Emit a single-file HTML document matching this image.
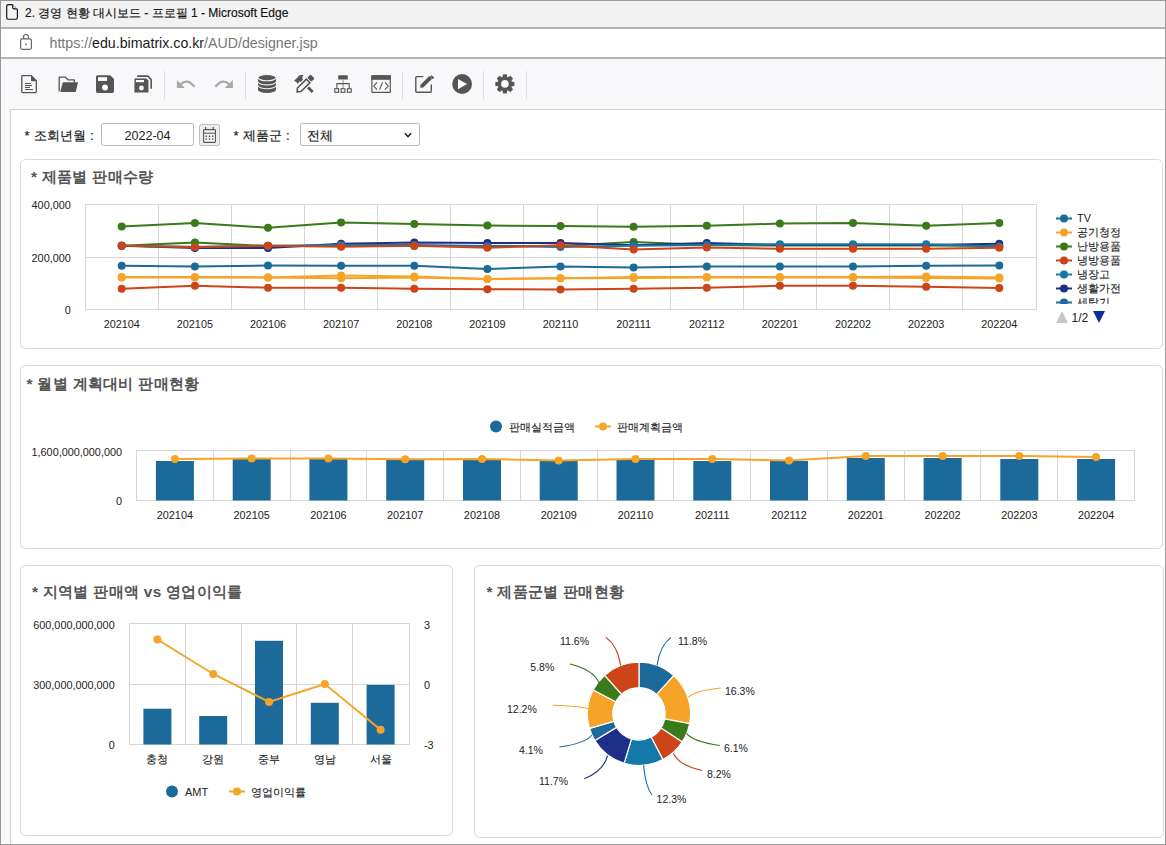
<!DOCTYPE html>
<html><head><meta charset="utf-8"><style>
html,body{margin:0;padding:0;width:1166px;height:845px;overflow:hidden;background:#fff;font-family:"Liberation Sans", sans-serif;}
.abs{position:absolute;}
svg text{font-family:"Liberation Sans", sans-serif;}
</style></head><body>
<div class="abs" style="left:0;top:0;width:1166px;height:27px;background:#f2f2f2;"></div>
<div class="abs" style="left:0;top:27px;width:1166px;height:2px;background:#b2b2b2;"></div>
<div class="abs" style="left:0;top:29px;width:1166px;height:28px;background:#fff;"></div>
<div class="abs" style="left:0;top:57px;width:1166px;height:2px;background:#b4b4b4;"></div>
<div class="abs" style="left:0;top:59px;width:1166px;height:786px;background:#f8f8fa;"></div>
<div class="abs" style="left:10px;top:109px;width:1156px;height:736px;background:#fff;border-left:1px solid #cfcfcf;border-top:1px solid #cfcfcf;"></div>
<svg class="abs" style="left:0;top:0" width="1166" height="845" viewBox="0 0 1166 845">
<g id="topbar">
<path d="M12.7,4.6 H8.3 a1.6,1.6 0 0 0 -1.6,1.6 V17.6 a1.6,1.6 0 0 0 1.6,1.6 H15.8 a1.6,1.6 0 0 0 1.6,-1.6 V9.1 M12.7,4.6 V7.6 a1.3,1.3 0 0 0 1.3,1.3 H17.4" fill="none" stroke="#111" stroke-width="1.15"/>
<path d="M12.7,4.6 L17.4,9.2" stroke="#777" stroke-width="0.8"/>
<text x="25" y="17" font-size="12" fill="#111" stroke="#111" stroke-width="0.15">2. 경영 현황 대시보드 - 프로필 1 - Microsoft Edge</text>
<path d="M23.5,38.5 v-1.5 a2.5,2.5 0 0 1 5,0 v1.5" fill="none" stroke="#666" stroke-width="1.2"/>
<rect x="20.6" y="38.9" width="10.8" height="10.4" rx="1.5" fill="none" stroke="#666" stroke-width="1.2"/>
<circle cx="26" cy="44.3" r="0.9" fill="#666"/>
<text x="49.5" y="48" font-size="14.2" fill="#767676">https://<tspan fill="#1a1a1a">edu.bimatrix.co.kr</tspan>/AUD/designer.jsp</text>
</g>

<g fill="#555" stroke="none">
<!-- doc -->
<path d="M21.8,76.5 a0.8,0.8 0 0 1 0.8,-0.8 h8.6 l5.1,5.1 v11 a0.8,0.8 0 0 1 -0.8,0.8 h-12.9 a0.8,0.8 0 0 1 -0.8,-0.8 z" fill="none" stroke="#555" stroke-width="1.3"/>
<path d="M31,75.5 L37,81.3 L31,81.3 Z"/>
<rect x="25" y="83" width="6" height="1"/><rect x="25" y="85" width="7" height="1"/><rect x="25" y="87" width="5" height="1"/><rect x="25" y="89" width="8" height="1"/>
<!-- folder -->
<path d="M59.2,91.3 V77.2 h6.2 l2.6,2.6 h6.3 v2.5" fill="none" stroke="#555" stroke-width="1.3" stroke-linejoin="round"/>
<path d="M62.8,82.2 H78 L75.8,91.9 H60.3 Z"/>
<!-- save -->
<path d="M96,76.8 a1.6,1.6 0 0 1 1.6,-1.6 h12.6 l3.8,3.8 v12.3 a1.6,1.6 0 0 1 -1.6,1.6 h-14.8 a1.6,1.6 0 0 1 -1.6,-1.6 z"/>
<rect x="98" y="77.2" width="9.1" height="3.7" fill="#fff"/>
<circle cx="105" cy="87.5" r="2.9" fill="#fff"/>
<!-- save all -->
<path d="M137.2,76.1 h10.6 l3.4,3.4 v9.2" fill="none" stroke="#555" stroke-width="1.6"/>
<path d="M134,79 a1,1 0 0 1 1,-1 h11.3 l2.6,2.6 v11.3 a1,1 0 0 1 -1,1 h-12.9 a1,1 0 0 1 -1,-1 z" stroke="#f8f8fa" stroke-width="0.8"/>
<rect x="135.9" y="80" width="8.1" height="2.2" fill="#fff"/>
<circle cx="141.4" cy="88" r="2.4" fill="#fff"/>
</g>
<g stroke="#dcdce0" stroke-width="1">
<line x1="164.5" y1="71" x2="164.5" y2="99"/><line x1="245.5" y1="71" x2="245.5" y2="99"/><line x1="402.5" y1="71" x2="402.5" y2="99"/><line x1="483.5" y1="71" x2="483.5" y2="99"/><line x1="526.5" y1="71" x2="526.5" y2="99"/>
</g>
<g fill="#a8a8a8" stroke="none">
<path d="M176.9,80 V88 H184.9 Z"/>
<path d="M180.5,84.5 Q187,77.5 194.5,86.8" fill="none" stroke="#a8a8a8" stroke-width="2.2"/>
<path d="M232.9,80 V88 H224.9 Z"/>
<path d="M229.3,84.5 Q222.8,77.5 215.3,86.8" fill="none" stroke="#a8a8a8" stroke-width="2.2"/>
</g>
<g fill="#555" stroke="none">
<!-- database -->
<path d="M258,78.2 A9,3.2 0 0 1 276,78.2 V89.7 A9,3.2 0 0 1 258,89.7 Z"/>
<path d="M258,77.6 A9,3.2 0 0 0 276,77.6 M258,81.7 A9,3.2 0 0 0 276,81.7 M258,85.5 A9,3.2 0 0 0 276,85.5" fill="none" stroke="#f8f8fa" stroke-width="1.1"/>
<!-- tools: hammer + pencil -->
<path d="M302.2,79.6 L313.6,91 L311.6,93 L300.2,81.6 Z"/>
<path d="M294,80.8 L296.5,78.5 L298.5,76.3 L300.2,75 L303.3,75 L302.6,76.6 L302.1,78 L303.6,80.2 L301.4,82.6 L299.4,81.5 L297.8,84 L296.6,82.2 Z"/>
<g transform="translate(296.4,92.6) rotate(-45)">
<path d="M0.6,0 L4,-2.8 H17 V2.8 H4 Z" fill="#f8f8fa" stroke="#f8f8fa" stroke-width="3.4" stroke-linejoin="round"/>
<path d="M0.9,0 L4,-2.5 H16.6 V2.5 H4 Z" fill="#f8f8fa" stroke="#555" stroke-width="1.6" stroke-linejoin="miter"/>
<rect x="18.2" y="-2.9" width="4.6" height="5.8" rx="1"/>
</g>
<!-- hierarchy -->
<rect x="338.2" y="75.3" width="9.6" height="4.2" rx="0.6"/>
<rect x="342.5" y="79.4" width="1.1" height="9" fill="#999"/>
<path d="M336.9,88.4 V83.6 H349.2 V88.4" fill="none" stroke="#555" stroke-width="1.1"/>
<rect x="334.8" y="88.7" width="3.8" height="3.6" fill="none" stroke="#555" stroke-width="1.1"/>
<rect x="341.1" y="88.7" width="3.8" height="3.6" fill="none" stroke="#555" stroke-width="1.1"/>
<rect x="347.4" y="88.7" width="3.8" height="3.6" fill="none" stroke="#555" stroke-width="1.1"/>
<!-- code window -->
<rect x="371.9" y="75.9" width="18.4" height="16.4" rx="0.6" fill="none" stroke="#555" stroke-width="1.2"/>
<rect x="371.3" y="75.3" width="19.6" height="4.5"/>
<path d="M377,82.4 L373.8,86 L377,89.6 M379.6,89.6 L382.6,82.4 M385,82.4 L388.2,86 L385,89.6" fill="none" stroke="#555" stroke-width="1.1"/>
<!-- edit -->
<path d="M423.2,76.6 H416.8 a1,1 0 0 0 -1,1 V91.3 a1,1 0 0 0 1,1 H430.3 a1,1 0 0 0 1,-1 V84.6" fill="none" stroke="#555" stroke-width="1.4"/>
<path d="M420.2,87.8 L420.5,84.8 L429.3,76 L432.1,78.8 L423.3,87.6 Z"/>
<path d="M430.4,74.9 L432,73.7 L434.4,76.1 L433.2,77.7 Z" transform="translate(-0.3,1.5)"/>
<!-- play -->
<circle cx="462.1" cy="84" r="9.9"/>
<path d="M458,79 V89.2 L467.1,84 Z" fill="#fff"/>
<!-- gear -->
<g transform="translate(504.9,83.9)">
<path d="M-1.93,-6.31 L-1.42,-8.99 L1.42,-8.99 L1.93,-6.31 L3.10,-5.83 L5.35,-7.36 L7.36,-5.35 L5.83,-3.10 L6.31,-1.93 L8.99,-1.42 L8.99,1.42 L6.31,1.93 L5.83,3.10 L7.36,5.35 L5.35,7.36 L3.10,5.83 L1.93,6.31 L1.42,8.99 L-1.42,8.99 L-1.93,6.31 L-3.10,5.83 L-5.35,7.36 L-7.36,5.35 L-5.83,3.10 L-6.31,1.93 L-8.99,1.42 L-8.99,-1.42 L-6.31,-1.93 L-5.83,-3.10 L-7.36,-5.35 L-5.35,-7.36 L-3.10,-5.83 Z" stroke="#555" stroke-width="1.2" stroke-linejoin="round"/>
<circle r="3.8" fill="#f8f8fa"/>
</g>
</g>

<text x="24.5" y="140" font-size="13" fill="#222" stroke="#222" stroke-width="0.2">*<tspan dx="1.3"> 조회년월 :</tspan></text>
<rect x="101.5" y="123.5" width="92" height="22" rx="2" fill="#fff" stroke="#b8b8b8"/>
<text x="147.5" y="140" font-size="12.6" fill="#222" text-anchor="middle">2022-04</text>
<rect x="199.5" y="124.5" width="20" height="21" rx="2" fill="#ededf0" stroke="#bdbdbd"/>
<g fill="none" stroke="#555" stroke-width="1.1">
<rect x="203.6" y="129.6" width="11.8" height="12.8" rx="0.6" fill="#fafafa"/>
<line x1="203.6" y1="133.2" x2="215.4" y2="133.2"/>
<line x1="205.6" y1="127" x2="205.6" y2="130"/><line x1="213.3" y1="127" x2="213.3" y2="130"/>
</g>
<g fill="#555"><circle cx="206.2" cy="136.2" r="0.85"/><circle cx="209.5" cy="136.2" r="0.85"/><circle cx="212.7" cy="136.2" r="0.85"/><circle cx="206.2" cy="139.1" r="0.85"/><circle cx="209.5" cy="139.1" r="0.85"/><circle cx="212.7" cy="139.1" r="0.85"/></g>
<text x="233.5" y="140" font-size="13" fill="#222" stroke="#222" stroke-width="0.2">*<tspan dx="1.3"> 제품군 :</tspan></text>
<rect x="300.5" y="123.5" width="119" height="22" rx="2" fill="#fff" stroke="#b8b8b8"/>
<text x="307" y="140" font-size="13" fill="#222" stroke="#222" stroke-width="0.2">전체</text>
<path d="M404.8,133.2 L408,136.6 L411.2,133.2" fill="none" stroke="#222" stroke-width="1.5"/>
<rect x="20.5" y="159.5" width="1142" height="189" rx="5" fill="#fff" stroke="#d9d9d9"/>
<rect x="20.5" y="365.5" width="1142" height="183" rx="5" fill="#fff" stroke="#d9d9d9"/>
<rect x="20.5" y="565.5" width="432" height="270" rx="5" fill="#fff" stroke="#d9d9d9"/>
<rect x="474.5" y="565.5" width="689" height="272" rx="5" fill="#fff" stroke="#d9d9d9"/>
<rect x="85.5" y="204.5" width="951.0" height="105.0" fill="none" stroke="#d6d6d6"/>
<line x1="85.5" y1="257.5" x2="1036.5" y2="257.5" stroke="#d6d6d6"/>
<line x1="158.5" y1="204.5" x2="158.5" y2="309.5" stroke="#d6d6d6"/>
<line x1="231.5" y1="204.5" x2="231.5" y2="309.5" stroke="#d6d6d6"/>
<line x1="304.5" y1="204.5" x2="304.5" y2="309.5" stroke="#d6d6d6"/>
<line x1="377.5" y1="204.5" x2="377.5" y2="309.5" stroke="#d6d6d6"/>
<line x1="450.5" y1="204.5" x2="450.5" y2="309.5" stroke="#d6d6d6"/>
<line x1="523.5" y1="204.5" x2="523.5" y2="309.5" stroke="#d6d6d6"/>
<line x1="597.5" y1="204.5" x2="597.5" y2="309.5" stroke="#d6d6d6"/>
<line x1="670.5" y1="204.5" x2="670.5" y2="309.5" stroke="#d6d6d6"/>
<line x1="743.5" y1="204.5" x2="743.5" y2="309.5" stroke="#d6d6d6"/>
<line x1="816.5" y1="204.5" x2="816.5" y2="309.5" stroke="#d6d6d6"/>
<line x1="889.5" y1="204.5" x2="889.5" y2="309.5" stroke="#d6d6d6"/>
<line x1="962.5" y1="204.5" x2="962.5" y2="309.5" stroke="#d6d6d6"/>
<text x="70.8" y="209" font-size="10.85" fill="#222" text-anchor="end" font-weight="normal">400,000</text>
<text x="70.8" y="261.5" font-size="10.85" fill="#222" text-anchor="end" font-weight="normal">200,000</text>
<text x="70.8" y="313.5" font-size="10.85" fill="#222" text-anchor="end" font-weight="normal">0</text>
<text x="121.735" y="328" font-size="10.85" fill="#222" text-anchor="middle" font-weight="normal">202104</text>
<text x="194.865" y="328" font-size="10.85" fill="#222" text-anchor="middle" font-weight="normal">202105</text>
<text x="267.995" y="328" font-size="10.85" fill="#222" text-anchor="middle" font-weight="normal">202106</text>
<text x="341.125" y="328" font-size="10.85" fill="#222" text-anchor="middle" font-weight="normal">202107</text>
<text x="414.255" y="328" font-size="10.85" fill="#222" text-anchor="middle" font-weight="normal">202108</text>
<text x="487.385" y="328" font-size="10.85" fill="#222" text-anchor="middle" font-weight="normal">202109</text>
<text x="560.515" y="328" font-size="10.85" fill="#222" text-anchor="middle" font-weight="normal">202110</text>
<text x="633.6449999999999" y="328" font-size="10.85" fill="#222" text-anchor="middle" font-weight="normal">202111</text>
<text x="706.775" y="328" font-size="10.85" fill="#222" text-anchor="middle" font-weight="normal">202112</text>
<text x="779.9049999999999" y="328" font-size="10.85" fill="#222" text-anchor="middle" font-weight="normal">202201</text>
<text x="853.035" y="328" font-size="10.85" fill="#222" text-anchor="middle" font-weight="normal">202202</text>
<text x="926.1649999999998" y="328" font-size="10.85" fill="#222" text-anchor="middle" font-weight="normal">202203</text>
<text x="999.295" y="328" font-size="10.85" fill="#222" text-anchor="middle" font-weight="normal">202204</text>
<polyline points="121.7,245.8 194.9,242.5 268.0,246 341.1,246 414.3,246 487.4,246 560.5,246 633.6,241.9 706.8,245 779.9,245.5 853.0,245.5 926.2,245.5 999.3,246" fill="none" stroke="#3a7a1a" stroke-width="2"/>
<circle cx="121.7" cy="245.8" r="4" fill="#3a7a1a"/>
<circle cx="194.9" cy="242.5" r="4" fill="#3a7a1a"/>
<circle cx="268.0" cy="246" r="4" fill="#3a7a1a"/>
<circle cx="341.1" cy="246" r="4" fill="#3a7a1a"/>
<circle cx="414.3" cy="246" r="4" fill="#3a7a1a"/>
<circle cx="487.4" cy="246" r="4" fill="#3a7a1a"/>
<circle cx="560.5" cy="246" r="4" fill="#3a7a1a"/>
<circle cx="633.6" cy="241.9" r="4" fill="#3a7a1a"/>
<circle cx="706.8" cy="245" r="4" fill="#3a7a1a"/>
<circle cx="779.9" cy="245.5" r="4" fill="#3a7a1a"/>
<circle cx="853.0" cy="245.5" r="4" fill="#3a7a1a"/>
<circle cx="926.2" cy="245.5" r="4" fill="#3a7a1a"/>
<circle cx="999.3" cy="246" r="4" fill="#3a7a1a"/>
<polyline points="121.7,265.7 194.9,266.6 268.0,265.5 341.1,265.7 414.3,265.7 487.4,268.9 560.5,266.6 633.6,267.5 706.8,266.6 779.9,266.6 853.0,266.6 926.2,265.7 999.3,265.6" fill="none" stroke="#1b6a9a" stroke-width="2"/>
<circle cx="121.7" cy="265.7" r="4" fill="#1b6a9a"/>
<circle cx="194.9" cy="266.6" r="4" fill="#1b6a9a"/>
<circle cx="268.0" cy="265.5" r="4" fill="#1b6a9a"/>
<circle cx="341.1" cy="265.7" r="4" fill="#1b6a9a"/>
<circle cx="414.3" cy="265.7" r="4" fill="#1b6a9a"/>
<circle cx="487.4" cy="268.9" r="4" fill="#1b6a9a"/>
<circle cx="560.5" cy="266.6" r="4" fill="#1b6a9a"/>
<circle cx="633.6" cy="267.5" r="4" fill="#1b6a9a"/>
<circle cx="706.8" cy="266.6" r="4" fill="#1b6a9a"/>
<circle cx="779.9" cy="266.6" r="4" fill="#1b6a9a"/>
<circle cx="853.0" cy="266.6" r="4" fill="#1b6a9a"/>
<circle cx="926.2" cy="265.7" r="4" fill="#1b6a9a"/>
<circle cx="999.3" cy="265.6" r="4" fill="#1b6a9a"/>
<polyline points="121.7,277 194.9,277 268.0,277.4 341.1,275.5 414.3,276.4 487.4,278.9 560.5,278.3 633.6,277 706.8,277 779.9,277 853.0,277 926.2,276.4 999.3,277.6" fill="none" stroke="#f6a428" stroke-width="2"/>
<circle cx="121.7" cy="277" r="4" fill="#f6a428"/>
<circle cx="194.9" cy="277" r="4" fill="#f6a428"/>
<circle cx="268.0" cy="277.4" r="4" fill="#f6a428"/>
<circle cx="341.1" cy="275.5" r="4" fill="#f6a428"/>
<circle cx="414.3" cy="276.4" r="4" fill="#f6a428"/>
<circle cx="487.4" cy="278.9" r="4" fill="#f6a428"/>
<circle cx="560.5" cy="278.3" r="4" fill="#f6a428"/>
<circle cx="633.6" cy="277" r="4" fill="#f6a428"/>
<circle cx="706.8" cy="277" r="4" fill="#f6a428"/>
<circle cx="779.9" cy="277" r="4" fill="#f6a428"/>
<circle cx="853.0" cy="277" r="4" fill="#f6a428"/>
<circle cx="926.2" cy="276.4" r="4" fill="#f6a428"/>
<circle cx="999.3" cy="277.6" r="4" fill="#f6a428"/>
<polyline points="121.7,277.5 194.9,277.5 268.0,277.5 341.1,278.3 414.3,277.5 487.4,279 560.5,278.3 633.6,278 706.8,277.5 779.9,277.5 853.0,277.5 926.2,278 999.3,278.5" fill="none" stroke="#f6a428" stroke-width="2"/>
<circle cx="121.7" cy="277.5" r="4" fill="#f6a428"/>
<circle cx="194.9" cy="277.5" r="4" fill="#f6a428"/>
<circle cx="268.0" cy="277.5" r="4" fill="#f6a428"/>
<circle cx="341.1" cy="278.3" r="4" fill="#f6a428"/>
<circle cx="414.3" cy="277.5" r="4" fill="#f6a428"/>
<circle cx="487.4" cy="279" r="4" fill="#f6a428"/>
<circle cx="560.5" cy="278.3" r="4" fill="#f6a428"/>
<circle cx="633.6" cy="278" r="4" fill="#f6a428"/>
<circle cx="706.8" cy="277.5" r="4" fill="#f6a428"/>
<circle cx="779.9" cy="277.5" r="4" fill="#f6a428"/>
<circle cx="853.0" cy="277.5" r="4" fill="#f6a428"/>
<circle cx="926.2" cy="278" r="4" fill="#f6a428"/>
<circle cx="999.3" cy="278.5" r="4" fill="#f6a428"/>
<polyline points="121.7,288.7 194.9,285.8 268.0,287.7 341.1,287.7 414.3,288.7 487.4,289.2 560.5,289.6 633.6,288.7 706.8,287.7 779.9,285.8 853.0,285.8 926.2,286.8 999.3,287.9" fill="none" stroke="#cc4418" stroke-width="2"/>
<circle cx="121.7" cy="288.7" r="4" fill="#cc4418"/>
<circle cx="194.9" cy="285.8" r="4" fill="#cc4418"/>
<circle cx="268.0" cy="287.7" r="4" fill="#cc4418"/>
<circle cx="341.1" cy="287.7" r="4" fill="#cc4418"/>
<circle cx="414.3" cy="288.7" r="4" fill="#cc4418"/>
<circle cx="487.4" cy="289.2" r="4" fill="#cc4418"/>
<circle cx="560.5" cy="289.6" r="4" fill="#cc4418"/>
<circle cx="633.6" cy="288.7" r="4" fill="#cc4418"/>
<circle cx="706.8" cy="287.7" r="4" fill="#cc4418"/>
<circle cx="779.9" cy="285.8" r="4" fill="#cc4418"/>
<circle cx="853.0" cy="285.8" r="4" fill="#cc4418"/>
<circle cx="926.2" cy="286.8" r="4" fill="#cc4418"/>
<circle cx="999.3" cy="287.9" r="4" fill="#cc4418"/>
<polyline points="121.7,226.4 194.9,223 268.0,227.7 341.1,222.6 414.3,224 487.4,225.5 560.5,226 633.6,226.8 706.8,225.8 779.9,223.6 853.0,223 926.2,225.8 999.3,223" fill="none" stroke="#3a7a1a" stroke-width="2"/>
<circle cx="121.7" cy="226.4" r="4" fill="#3a7a1a"/>
<circle cx="194.9" cy="223" r="4" fill="#3a7a1a"/>
<circle cx="268.0" cy="227.7" r="4" fill="#3a7a1a"/>
<circle cx="341.1" cy="222.6" r="4" fill="#3a7a1a"/>
<circle cx="414.3" cy="224" r="4" fill="#3a7a1a"/>
<circle cx="487.4" cy="225.5" r="4" fill="#3a7a1a"/>
<circle cx="560.5" cy="226" r="4" fill="#3a7a1a"/>
<circle cx="633.6" cy="226.8" r="4" fill="#3a7a1a"/>
<circle cx="706.8" cy="225.8" r="4" fill="#3a7a1a"/>
<circle cx="779.9" cy="223.6" r="4" fill="#3a7a1a"/>
<circle cx="853.0" cy="223" r="4" fill="#3a7a1a"/>
<circle cx="926.2" cy="225.8" r="4" fill="#3a7a1a"/>
<circle cx="999.3" cy="223" r="4" fill="#3a7a1a"/>
<polyline points="121.7,245.8 194.9,248 268.0,248 341.1,243.8 414.3,242.5 487.4,243 560.5,243 633.6,245.3 706.8,243 779.9,245 853.0,245 926.2,245 999.3,243.8" fill="none" stroke="#1f2f87" stroke-width="2"/>
<circle cx="121.7" cy="245.8" r="4" fill="#1f2f87"/>
<circle cx="194.9" cy="248" r="4" fill="#1f2f87"/>
<circle cx="268.0" cy="248" r="4" fill="#1f2f87"/>
<circle cx="341.1" cy="243.8" r="4" fill="#1f2f87"/>
<circle cx="414.3" cy="242.5" r="4" fill="#1f2f87"/>
<circle cx="487.4" cy="243" r="4" fill="#1f2f87"/>
<circle cx="560.5" cy="243" r="4" fill="#1f2f87"/>
<circle cx="633.6" cy="245.3" r="4" fill="#1f2f87"/>
<circle cx="706.8" cy="243" r="4" fill="#1f2f87"/>
<circle cx="779.9" cy="245" r="4" fill="#1f2f87"/>
<circle cx="853.0" cy="245" r="4" fill="#1f2f87"/>
<circle cx="926.2" cy="245" r="4" fill="#1f2f87"/>
<circle cx="999.3" cy="243.8" r="4" fill="#1f2f87"/>
<polyline points="121.7,245.8 194.9,247 268.0,245.8 341.1,245 414.3,245 487.4,246 560.5,247 633.6,245.8 706.8,245 779.9,244.3 853.0,244.3 926.2,244.3 999.3,246.5" fill="none" stroke="#1478a8" stroke-width="2"/>
<circle cx="121.7" cy="245.8" r="4" fill="#1478a8"/>
<circle cx="194.9" cy="247" r="4" fill="#1478a8"/>
<circle cx="268.0" cy="245.8" r="4" fill="#1478a8"/>
<circle cx="341.1" cy="245" r="4" fill="#1478a8"/>
<circle cx="414.3" cy="245" r="4" fill="#1478a8"/>
<circle cx="487.4" cy="246" r="4" fill="#1478a8"/>
<circle cx="560.5" cy="247" r="4" fill="#1478a8"/>
<circle cx="633.6" cy="245.8" r="4" fill="#1478a8"/>
<circle cx="706.8" cy="245" r="4" fill="#1478a8"/>
<circle cx="779.9" cy="244.3" r="4" fill="#1478a8"/>
<circle cx="853.0" cy="244.3" r="4" fill="#1478a8"/>
<circle cx="926.2" cy="244.3" r="4" fill="#1478a8"/>
<circle cx="999.3" cy="246.5" r="4" fill="#1478a8"/>
<polyline points="121.7,245.8 194.9,247 268.0,245.8 341.1,246.8 414.3,245.7 487.4,247.7 560.5,245.3 633.6,249.4 706.8,247.5 779.9,248.7 853.0,248.7 926.2,248.7 999.3,247.8" fill="none" stroke="#cc4418" stroke-width="2"/>
<circle cx="121.7" cy="245.8" r="4" fill="#cc4418"/>
<circle cx="194.9" cy="247" r="4" fill="#cc4418"/>
<circle cx="268.0" cy="245.8" r="4" fill="#cc4418"/>
<circle cx="341.1" cy="246.8" r="4" fill="#cc4418"/>
<circle cx="414.3" cy="245.7" r="4" fill="#cc4418"/>
<circle cx="487.4" cy="247.7" r="4" fill="#cc4418"/>
<circle cx="560.5" cy="245.3" r="4" fill="#cc4418"/>
<circle cx="633.6" cy="249.4" r="4" fill="#cc4418"/>
<circle cx="706.8" cy="247.5" r="4" fill="#cc4418"/>
<circle cx="779.9" cy="248.7" r="4" fill="#cc4418"/>
<circle cx="853.0" cy="248.7" r="4" fill="#cc4418"/>
<circle cx="926.2" cy="248.7" r="4" fill="#cc4418"/>
<circle cx="999.3" cy="247.8" r="4" fill="#cc4418"/>
<clipPath id="lc"><rect x="1050" y="205" width="100" height="99"/></clipPath><g clip-path="url(#lc)">
<line x1="1056" y1="218.5" x2="1072" y2="218.5" stroke="#1b6a9a" stroke-width="2"/><circle cx="1064" cy="218.5" r="4" fill="#1b6a9a"/>
<text x="1077" y="221.7" font-size="11" fill="#222" text-anchor="start" font-weight="normal">TV</text>
<line x1="1056" y1="232.5" x2="1072" y2="232.5" stroke="#f6a428" stroke-width="2"/><circle cx="1064" cy="232.5" r="4" fill="#f6a428"/>
<text x="1077" y="235.7" font-size="11" fill="#222" text-anchor="start" font-weight="normal" stroke="#222" stroke-width="0.12">공기청정</text>
<line x1="1056" y1="246.5" x2="1072" y2="246.5" stroke="#3a7a1a" stroke-width="2"/><circle cx="1064" cy="246.5" r="4" fill="#3a7a1a"/>
<text x="1077" y="249.7" font-size="11" fill="#222" text-anchor="start" font-weight="normal" stroke="#222" stroke-width="0.12">난방용품</text>
<line x1="1056" y1="260.5" x2="1072" y2="260.5" stroke="#cc4418" stroke-width="2"/><circle cx="1064" cy="260.5" r="4" fill="#cc4418"/>
<text x="1077" y="263.7" font-size="11" fill="#222" text-anchor="start" font-weight="normal" stroke="#222" stroke-width="0.12">냉방용품</text>
<line x1="1056" y1="274.5" x2="1072" y2="274.5" stroke="#1478a8" stroke-width="2"/><circle cx="1064" cy="274.5" r="4" fill="#1478a8"/>
<text x="1077" y="277.7" font-size="11" fill="#222" text-anchor="start" font-weight="normal" stroke="#222" stroke-width="0.12">냉장고</text>
<line x1="1056" y1="288.5" x2="1072" y2="288.5" stroke="#1f2f87" stroke-width="2"/><circle cx="1064" cy="288.5" r="4" fill="#1f2f87"/>
<text x="1077" y="291.7" font-size="11" fill="#222" text-anchor="start" font-weight="normal" stroke="#222" stroke-width="0.12">생활가전</text>
<line x1="1056" y1="302.5" x2="1072" y2="302.5" stroke="#1b6a9a" stroke-width="2"/><circle cx="1064" cy="302.5" r="4" fill="#1b6a9a"/>
<text x="1077" y="305.7" font-size="11" fill="#222" text-anchor="start" font-weight="normal" stroke="#222" stroke-width="0.12">세탁기</text>
</g>
<path d="M1056,323 L1062,311 L1068,323 Z" fill="#c8c8c8"/>
<text x="1071.5" y="322" font-size="12" fill="#222" text-anchor="start" font-weight="normal">1/2</text>
<path d="M1093,311 L1105,311 L1099,323 Z" fill="#0b2f9a"/>
<rect x="136.5" y="450.5" width="998.0" height="50.0" fill="none" stroke="#d6d6d6"/>
<line x1="213.5" y1="450.5" x2="213.5" y2="500.5" stroke="#d6d6d6"/>
<line x1="290.5" y1="450.5" x2="290.5" y2="500.5" stroke="#d6d6d6"/>
<line x1="366.5" y1="450.5" x2="366.5" y2="500.5" stroke="#d6d6d6"/>
<line x1="443.5" y1="450.5" x2="443.5" y2="500.5" stroke="#d6d6d6"/>
<line x1="520.5" y1="450.5" x2="520.5" y2="500.5" stroke="#d6d6d6"/>
<line x1="597.5" y1="450.5" x2="597.5" y2="500.5" stroke="#d6d6d6"/>
<line x1="673.5" y1="450.5" x2="673.5" y2="500.5" stroke="#d6d6d6"/>
<line x1="750.5" y1="450.5" x2="750.5" y2="500.5" stroke="#d6d6d6"/>
<line x1="827.5" y1="450.5" x2="827.5" y2="500.5" stroke="#d6d6d6"/>
<line x1="904.5" y1="450.5" x2="904.5" y2="500.5" stroke="#d6d6d6"/>
<line x1="980.5" y1="450.5" x2="980.5" y2="500.5" stroke="#d6d6d6"/>
<line x1="1057.5" y1="450.5" x2="1057.5" y2="500.5" stroke="#d6d6d6"/>
<rect x="155.9" y="461" width="38" height="39.5" fill="#1b6a9a"/>
<rect x="232.7" y="459" width="38" height="41.5" fill="#1b6a9a"/>
<rect x="309.4" y="459" width="38" height="41.5" fill="#1b6a9a"/>
<rect x="386.2" y="459" width="38" height="41.5" fill="#1b6a9a"/>
<rect x="463.0" y="460" width="38" height="40.5" fill="#1b6a9a"/>
<rect x="539.7" y="461" width="38" height="39.5" fill="#1b6a9a"/>
<rect x="616.5" y="460" width="38" height="40.5" fill="#1b6a9a"/>
<rect x="693.3" y="461" width="38" height="39.5" fill="#1b6a9a"/>
<rect x="770.0" y="461" width="38" height="39.5" fill="#1b6a9a"/>
<rect x="846.8" y="458" width="38" height="42.5" fill="#1b6a9a"/>
<rect x="923.6" y="458" width="38" height="42.5" fill="#1b6a9a"/>
<rect x="1000.3" y="459" width="38" height="41.5" fill="#1b6a9a"/>
<rect x="1077.1" y="459" width="38" height="41.5" fill="#1b6a9a"/>
<polyline points="174.9,459 251.7,458.5 328.4,458.5 405.2,459.3 482.0,459 558.7,460.4 635.5,459 712.3,459 789.0,460.4 865.8,456 942.6,456 1019.3,456 1096.1,457" fill="none" stroke="#f6a428" stroke-width="2"/>
<circle cx="174.9" cy="459" r="4" fill="#f6a428"/>
<circle cx="251.7" cy="458.5" r="4" fill="#f6a428"/>
<circle cx="328.4" cy="458.5" r="4" fill="#f6a428"/>
<circle cx="405.2" cy="459.3" r="4" fill="#f6a428"/>
<circle cx="482.0" cy="459" r="4" fill="#f6a428"/>
<circle cx="558.7" cy="460.4" r="4" fill="#f6a428"/>
<circle cx="635.5" cy="459" r="4" fill="#f6a428"/>
<circle cx="712.3" cy="459" r="4" fill="#f6a428"/>
<circle cx="789.0" cy="460.4" r="4" fill="#f6a428"/>
<circle cx="865.8" cy="456" r="4" fill="#f6a428"/>
<circle cx="942.6" cy="456" r="4" fill="#f6a428"/>
<circle cx="1019.3" cy="456" r="4" fill="#f6a428"/>
<circle cx="1096.1" cy="457" r="4" fill="#f6a428"/>
<text x="122" y="455.5" font-size="10.85" fill="#222" text-anchor="end" font-weight="normal">1,600,000,000,000</text>
<text x="122" y="504.5" font-size="10.85" fill="#222" text-anchor="end" font-weight="normal">0</text>
<text x="174.8846153846154" y="519" font-size="10.85" fill="#222" text-anchor="middle" font-weight="normal">202104</text>
<text x="251.65384615384616" y="519" font-size="10.85" fill="#222" text-anchor="middle" font-weight="normal">202105</text>
<text x="328.4230769230769" y="519" font-size="10.85" fill="#222" text-anchor="middle" font-weight="normal">202106</text>
<text x="405.19230769230774" y="519" font-size="10.85" fill="#222" text-anchor="middle" font-weight="normal">202107</text>
<text x="481.96153846153845" y="519" font-size="10.85" fill="#222" text-anchor="middle" font-weight="normal">202108</text>
<text x="558.7307692307693" y="519" font-size="10.85" fill="#222" text-anchor="middle" font-weight="normal">202109</text>
<text x="635.5" y="519" font-size="10.85" fill="#222" text-anchor="middle" font-weight="normal">202110</text>
<text x="712.2692307692308" y="519" font-size="10.85" fill="#222" text-anchor="middle" font-weight="normal">202111</text>
<text x="789.0384615384615" y="519" font-size="10.85" fill="#222" text-anchor="middle" font-weight="normal">202112</text>
<text x="865.8076923076924" y="519" font-size="10.85" fill="#222" text-anchor="middle" font-weight="normal">202201</text>
<text x="942.5769230769231" y="519" font-size="10.85" fill="#222" text-anchor="middle" font-weight="normal">202202</text>
<text x="1019.3461538461539" y="519" font-size="10.85" fill="#222" text-anchor="middle" font-weight="normal">202203</text>
<text x="1096.1153846153848" y="519" font-size="10.85" fill="#222" text-anchor="middle" font-weight="normal">202204</text>
<circle cx="496" cy="426.5" r="6" fill="#1b6a9a"/>
<text x="509" y="430.5" font-size="11" fill="#222" text-anchor="start" font-weight="normal" stroke="#222" stroke-width="0.12">판매실적금액</text>
<line x1="595" y1="426.5" x2="611" y2="426.5" stroke="#f6a428" stroke-width="2"/><circle cx="603" cy="426.5" r="4" fill="#f6a428"/>
<text x="617" y="430.5" font-size="11" fill="#222" text-anchor="start" font-weight="normal" stroke="#222" stroke-width="0.12">판매계획금액</text>
<rect x="129.5" y="623.5" width="280.0" height="121.0" fill="none" stroke="#d6d6d6"/>
<line x1="129.5" y1="684.5" x2="409.5" y2="684.5" stroke="#d6d6d6"/>
<line x1="185.5" y1="623.5" x2="185.5" y2="744.5" stroke="#d6d6d6"/>
<line x1="241.5" y1="623.5" x2="241.5" y2="744.5" stroke="#d6d6d6"/>
<line x1="296.5" y1="623.5" x2="296.5" y2="744.5" stroke="#d6d6d6"/>
<line x1="352.5" y1="623.5" x2="352.5" y2="744.5" stroke="#d6d6d6"/>
<rect x="143.4" y="708.7" width="28" height="35.799999999999955" fill="#1b6a9a"/>
<rect x="199.2" y="716" width="28" height="28.5" fill="#1b6a9a"/>
<rect x="255.0" y="640.8" width="28" height="103.70000000000005" fill="#1b6a9a"/>
<rect x="310.8" y="702.8" width="28" height="41.700000000000045" fill="#1b6a9a"/>
<rect x="366.6" y="684.9" width="28" height="59.60000000000002" fill="#1b6a9a"/>
<polyline points="157.4,639.5 213.2,674 269.0,701.9 324.8,684 380.6,729.7" fill="none" stroke="#f6a428" stroke-width="2"/>
<circle cx="157.4" cy="639.5" r="4" fill="#f6a428"/>
<circle cx="213.2" cy="674" r="4" fill="#f6a428"/>
<circle cx="269.0" cy="701.9" r="4" fill="#f6a428"/>
<circle cx="324.8" cy="684" r="4" fill="#f6a428"/>
<circle cx="380.6" cy="729.7" r="4" fill="#f6a428"/>
<text x="114.7" y="628.5" font-size="10.85" fill="#222" text-anchor="end" font-weight="normal">600,000,000,000</text>
<text x="114.7" y="688.5" font-size="10.85" fill="#222" text-anchor="end" font-weight="normal">300,000,000,000</text>
<text x="114.7" y="748.5" font-size="10.85" fill="#222" text-anchor="end" font-weight="normal">0</text>
<text x="424" y="628.5" font-size="10.85" fill="#222" text-anchor="start" font-weight="normal">3</text>
<text x="424" y="688.5" font-size="10.85" fill="#222" text-anchor="start" font-weight="normal">0</text>
<text x="424" y="748.5" font-size="10.85" fill="#222" text-anchor="start" font-weight="normal">-3</text>
<text x="157.4" y="763" font-size="11" fill="#222" text-anchor="middle" font-weight="normal" stroke="#222" stroke-width="0.12">충청</text>
<text x="213.2" y="763" font-size="11" fill="#222" text-anchor="middle" font-weight="normal" stroke="#222" stroke-width="0.12">강원</text>
<text x="269.0" y="763" font-size="11" fill="#222" text-anchor="middle" font-weight="normal" stroke="#222" stroke-width="0.12">중부</text>
<text x="324.79999999999995" y="763" font-size="11" fill="#222" text-anchor="middle" font-weight="normal" stroke="#222" stroke-width="0.12">영남</text>
<text x="380.6" y="763" font-size="11" fill="#222" text-anchor="middle" font-weight="normal" stroke="#222" stroke-width="0.12">서울</text>
<circle cx="172" cy="791.5" r="6" fill="#1b6a9a"/>
<text x="185" y="795.5" font-size="11" fill="#222" text-anchor="start" font-weight="normal">AMT</text>
<line x1="229" y1="791.5" x2="245" y2="791.5" stroke="#f6a428" stroke-width="2"/><circle cx="237" cy="791.5" r="4" fill="#f6a428"/>
<text x="251" y="795.5" font-size="11" fill="#222" text-anchor="start" font-weight="normal" stroke="#222" stroke-width="0.12">영업이익률</text>
<path d="M639.00,662.20 A51.6,51.6 0 0 1 673.82,675.72 L656.68,694.46 A26.2,26.2 0 0 0 639.00,687.60 Z" fill="#1b6a9a" stroke="#fff" stroke-width="1.2"/>
<path d="M673.82,675.72 A51.6,51.6 0 0 1 689.64,723.70 L664.71,718.83 A26.2,26.2 0 0 0 656.68,694.46 Z" fill="#f6a428" stroke="#fff" stroke-width="1.2"/>
<path d="M689.64,723.70 A51.6,51.6 0 0 1 682.28,741.90 L660.97,728.07 A26.2,26.2 0 0 0 664.71,718.83 Z" fill="#3a7a1a" stroke="#fff" stroke-width="1.2"/>
<path d="M682.28,741.90 A51.6,51.6 0 0 1 662.84,759.56 L651.10,737.04 A26.2,26.2 0 0 0 660.97,728.07 Z" fill="#cc4418" stroke="#fff" stroke-width="1.2"/>
<path d="M662.84,759.56 A51.6,51.6 0 0 1 624.15,763.22 L631.46,738.89 A26.2,26.2 0 0 0 651.10,737.04 Z" fill="#1478a8" stroke="#fff" stroke-width="1.2"/>
<path d="M624.15,763.22 A51.6,51.6 0 0 1 594.86,740.53 L616.59,727.37 A26.2,26.2 0 0 0 631.46,738.89 Z" fill="#1f2f87" stroke="#fff" stroke-width="1.2"/>
<path d="M594.86,740.53 A51.6,51.6 0 0 1 589.51,728.42 L613.87,721.22 A26.2,26.2 0 0 0 616.59,727.37 Z" fill="#1b6a9a" stroke="#fff" stroke-width="1.2"/>
<path d="M589.51,728.42 A51.6,51.6 0 0 1 593.20,690.04 L615.74,701.73 A26.2,26.2 0 0 0 613.87,721.22 Z" fill="#f6a428" stroke="#fff" stroke-width="1.2"/>
<path d="M593.20,690.04 A51.6,51.6 0 0 1 604.66,675.28 L621.56,694.24 A26.2,26.2 0 0 0 615.74,701.73 Z" fill="#3a7a1a" stroke="#fff" stroke-width="1.2"/>
<path d="M604.66,675.28 A51.6,51.6 0 0 1 639.00,662.20 L639.00,687.60 A26.2,26.2 0 0 0 621.56,694.24 Z" fill="#cc4418" stroke="#fff" stroke-width="1.2"/>
<path d="M657,665.5 Q659.8,645.8299999999999 671,637.4" fill="none" stroke="#1b6a9a" stroke-width="1.15"/>
<text x="678" y="644.5" font-size="10.5" fill="#222" text-anchor="start" font-weight="normal">11.8%</text>
<path d="M688.2,697.4 Q694.72,690.8199999999999 720.8,688" fill="none" stroke="#f6a428" stroke-width="1.15"/>
<text x="725" y="695" font-size="10.5" fill="#222" text-anchor="start" font-weight="normal">16.3%</text>
<path d="M686.5,733.4 Q693.2,741.87 720,745.5" fill="none" stroke="#3a7a1a" stroke-width="1.15"/>
<text x="724" y="751.5" font-size="10.5" fill="#222" text-anchor="start" font-weight="normal">6.1%</text>
<path d="M673.4,753.4 Q679.12,765.37 702,770.5" fill="none" stroke="#cc4418" stroke-width="1.15"/>
<text x="707" y="777.5" font-size="10.5" fill="#222" text-anchor="start" font-weight="normal">8.2%</text>
<path d="M643.6,765 Q645.28,786.0 652,795" fill="none" stroke="#1478a8" stroke-width="1.15"/>
<text x="656.6" y="803" font-size="10.5" fill="#222" text-anchor="start" font-weight="normal">12.3%</text>
<path d="M607.6,755.7 Q602.9200000000001,771.8000000000001 584.2,778.7" fill="none" stroke="#1f2f87" stroke-width="1.15"/>
<text x="539" y="784.5" font-size="10.5" fill="#222" text-anchor="start" font-weight="normal">11.7%</text>
<path d="M592,735 Q585.5,743.4 559.5,747" fill="none" stroke="#1b6a9a" stroke-width="1.15"/>
<text x="519" y="754" font-size="10.5" fill="#222" text-anchor="start" font-weight="normal">4.1%</text>
<path d="M587.7,708.7 Q580.7,706.3199999999999 552.7,705.3" fill="none" stroke="#f6a428" stroke-width="1.15"/>
<text x="507" y="713" font-size="10.5" fill="#222" text-anchor="start" font-weight="normal">12.2%</text>
<path d="M599,682.7 Q593.16,669.61 569.8,664" fill="none" stroke="#3a7a1a" stroke-width="1.15"/>
<text x="530.3" y="671" font-size="10.5" fill="#222" text-anchor="start" font-weight="normal">5.8%</text>
<path d="M620.6,665.5 Q617.64,645.8299999999999 605.8,637.4" fill="none" stroke="#cc4418" stroke-width="1.15"/>
<text x="560" y="645" font-size="10.5" fill="#222" text-anchor="start" font-weight="normal">11.6%</text>
<text x="31" y="181.9" font-size="15.4" fill="#555" text-anchor="start" font-weight="bold" letter-spacing="0.3">* 제품별 판매수량</text>
<text x="26.5" y="389.2" font-size="15.4" fill="#555" text-anchor="start" font-weight="bold" letter-spacing="0.3">* 월별 계획대비 판매현황</text>
<text x="32" y="597.3" font-size="15.4" fill="#555" text-anchor="start" font-weight="bold" letter-spacing="0.3">* 지역별 판매액 vs 영업이익률</text>
<text x="486.5" y="597.3" font-size="15.4" fill="#555" text-anchor="start" font-weight="bold" letter-spacing="0.3">* 제품군별 판매현황</text>
</svg>
<div class="abs" style="left:0;top:0;width:1164px;height:843px;border:1px solid #9a9a9a;"></div>
</body></html>
